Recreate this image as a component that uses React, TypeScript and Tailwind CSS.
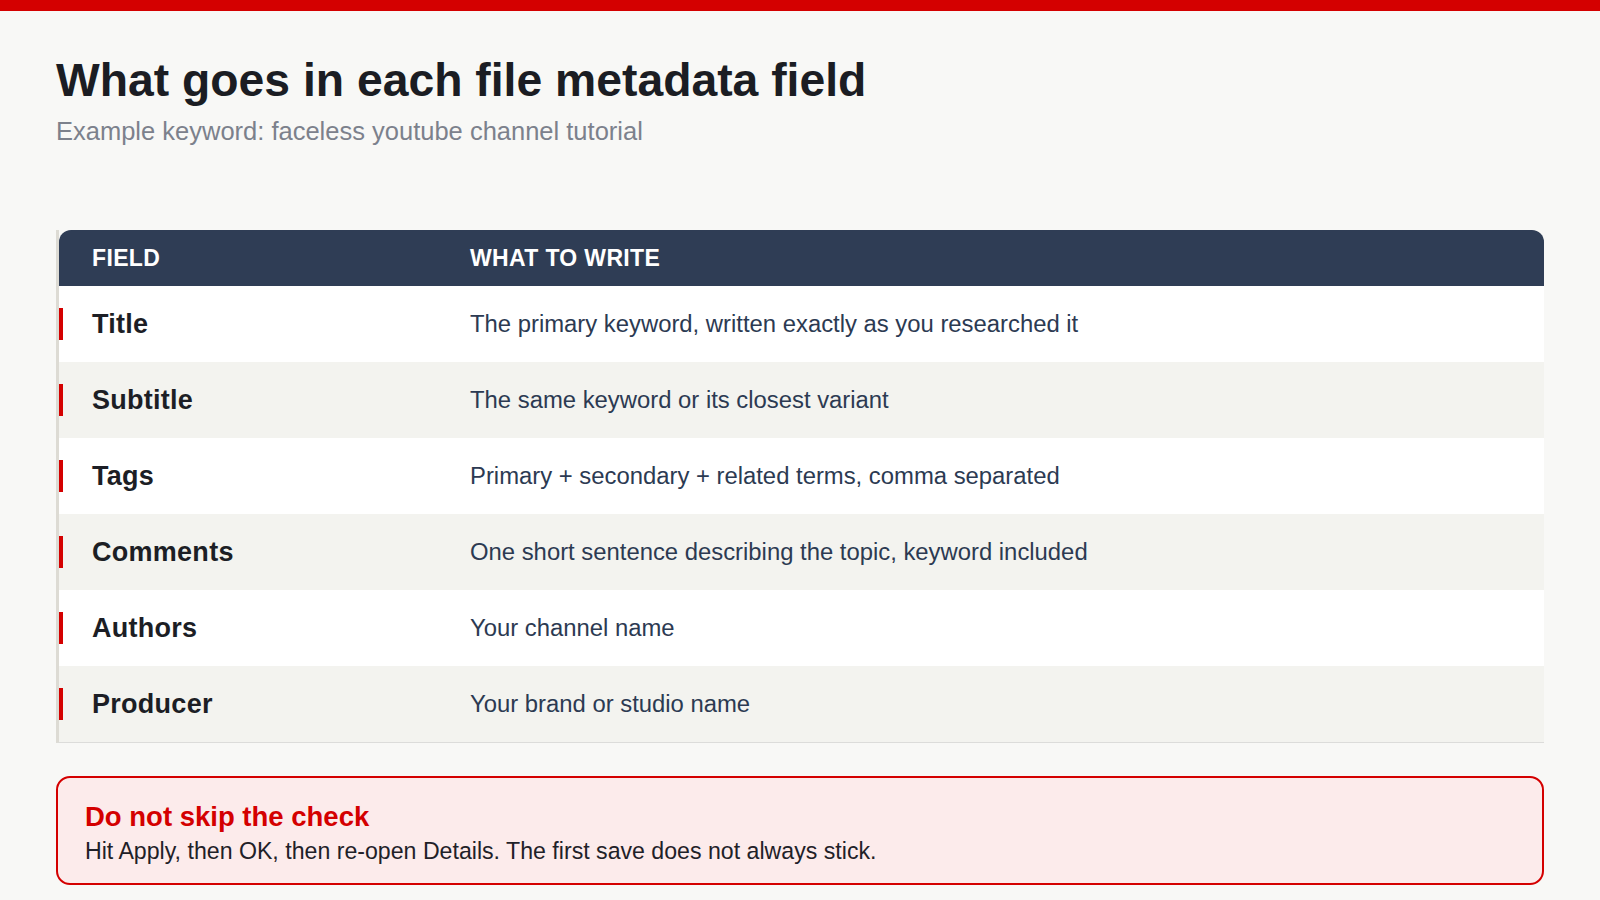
const rows = [
  { field: "Title", text: "The primary keyword, written exactly as you researched it" },
  { field: "Subtitle", text: "The same keyword or its closest variant" },
  { field: "Tags", text: "Primary + secondary + related terms, comma separated" },
  { field: "Comments", text: "One short sentence describing the topic, keyword included" },
  { field: "Authors", text: "Your channel name" },
  { field: "Producer", text: "Your brand or studio name" },
];

export default function App() {
  return (
    <div className="min-h-screen bg-[#f8f8f6] font-['Liberation_Sans',Arial,sans-serif]">
      <div className="h-[11px] bg-[#d40000]" />

      <div className="px-[56px] pt-[42px]">
        <h1 className="text-[46.3px] leading-[1.2] font-bold text-[#1b1d23]">
          What goes in each file metadata field
        </h1>
        <p className="mt-[7px] text-[25.5px] leading-[1.2] text-[#7c818c]">
          Example keyword: faceless youtube channel tutorial
        </p>

        {/* table */}
        <div className="mt-[84px] border-l-[3px] border-b border-l-[#dddbd4] border-b-[#dcdcda]">
          <div className="flex h-[56px] items-center rounded-t-[12px] bg-[#2f3d55] pl-[33px] text-[23px] font-bold tracking-[0.015em] text-white">
            <div className="w-[378px]">FIELD</div>
            <div>WHAT TO WRITE</div>
          </div>
          {rows.map((row, i) => (
            <div
              key={row.field}
              className={
                "flex h-[76px] items-center " +
                (i % 2 === 0 ? "bg-white" : "bg-[#f3f3ef]")
              }
            >
              <div className="h-[32px] w-[4px] bg-[#d40000]" />
              <div className="w-[407px] pl-[29px] text-[27px] font-bold tracking-[0.01em] text-[#1c1e25]">
                {row.field}
              </div>
              <div className="flex-1 text-[23.85px] text-[#2c3a52]">{row.text}</div>
            </div>
          ))}
        </div>

        {/* warning */}
        <div className="mt-[33px] rounded-[14px] border-2 border-[#d40000] bg-[#fcebeb] px-[27px] pt-[22px] pb-[17px]">
          <div className="text-[27.5px] leading-[1.2] font-bold text-[#d40000]">
            Do not skip the check
          </div>
          <div className="mt-[5px] text-[23.15px] leading-[1.2] text-[#1f2128]">
            Hit Apply, then OK, then re-open Details. The first save does not always stick.
          </div>
        </div>
      </div>
    </div>
  );
}
